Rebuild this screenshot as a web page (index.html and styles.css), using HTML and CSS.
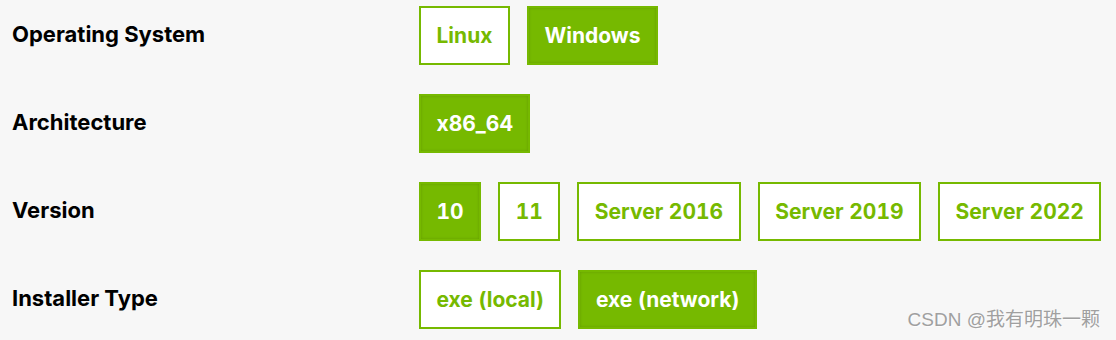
FILE: index.html
```html
<!DOCTYPE html>
<html lang="en">

<head>
    <meta charset="UTF-8">
    <meta name="viewport" content="width=device-width, initial-scale=1.0">
    <title>Download Selector</title>
    <link rel="stylesheet" href="styles.css">
</head>

<body>
    <div id="selector">
        <div class="row">
            <div class="label">Operating System</div>
            <div class="options">
                <button class="opt">Linux</button>
                <button class="opt active">Windows</button>
            </div>
        </div>
        <div class="row">
            <div class="label">Architecture</div>
            <div class="options">
                <button class="opt active">x86_64</button>
            </div>
        </div>
        <div class="row">
            <div class="label">Version</div>
            <div class="options">
                <button class="opt active">10</button>
                <button class="opt">11</button>
                <button class="opt">Server 2016</button>
                <button class="opt">Server 2019</button>
                <button class="opt">Server 2022</button>
            </div>
        </div>
        <div class="row">
            <div class="label">Installer Type</div>
            <div class="options">
                <button class="opt">exe (local)</button>
                <button class="opt active">exe (network)</button>
            </div>
        </div>
    </div>

    <div class="watermark">CSDN @我有明珠一颗</div>
</body>

</html>
```

FILE: styles.css
```css
body {
    font-family: Inter, "Noto Sans", sans-serif;
    background-color: #f7f7f7;
    margin: 0;
    padding: 6px 12px;
}

#selector {
    display: flex;
    flex-direction: column;
    gap: 29px;
}

.row {
    display: flex;
    align-items: center;
}

.label {
    width: 407px;
    flex-shrink: 0;
    padding-bottom: 3px;
    font-size: 22px;
    font-weight: 700;
    color: #000;
}

.options {
    display: flex;
    gap: 17px;
}

.opt {
    height: 59px;
    padding: 0 15.5px;
    border: 2px solid #76b900;
    background-color: #fff;
    color: #76b900;
    font-family: Inter, "Noto Sans", sans-serif;
    font-size: 21px;
    font-weight: 700;
    font-variant-numeric: tabular-nums;
    white-space: nowrap;
    cursor: pointer;
}

.opt.active {
    background-color: #76b900;
    color: #fff;
    box-shadow: inset 0 0 3px rgba(0, 0, 0, 0.15);
}

.watermark {
    position: absolute;
    right: 16px;
    bottom: 9px;
    font-family: "Liberation Sans", "Noto Sans CJK SC", sans-serif;
    font-size: 19px;
    color: #a0a0a0;
    text-shadow: 1px 1px 1px rgba(255, 255, 255, 0.8);
}
```
